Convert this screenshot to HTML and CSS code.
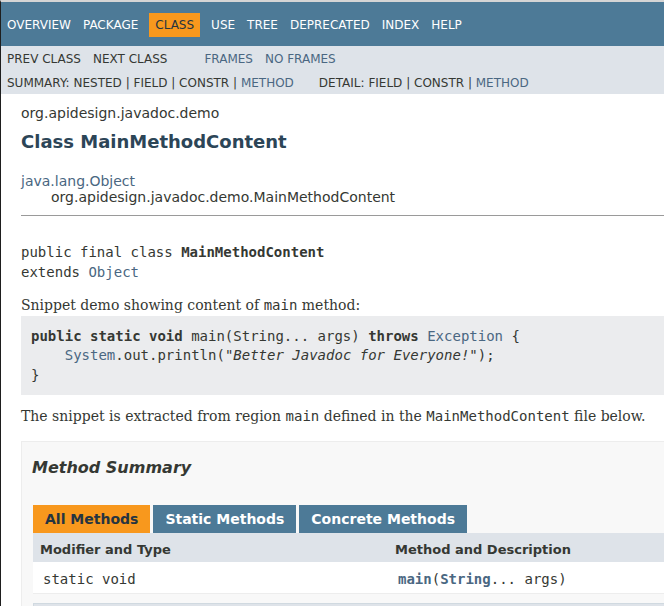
FILE: index.html
```html
<!DOCTYPE html>
<html lang="en">
<head>
<meta charset="utf-8">
<title>MainMethodContent</title>
<link rel="stylesheet" href="styles.css">
</head>
<body>
<div class="topNav">
  <ul class="navList">
    <li><a href="#">Overview</a></li>
    <li><a href="#">Package</a></li>
    <li class="current">Class</li>
    <li><a href="#">Use</a></li>
    <li><a href="#">Tree</a></li>
    <li><a href="#">Deprecated</a></li>
    <li><a href="#">Index</a></li>
    <li><a href="#">Help</a></li>
  </ul>
</div>
<div class="subNav">
  <div class="subRow">
    <ul class="navList">
      <li>Prev Class</li>
      <li>Next Class</li>
    </ul>
    <ul class="navList">
      <li><a href="#">Frames</a></li>
      <li><a href="#">No Frames</a></li>
    </ul>
  </div>
  <div class="subRow2">
    <ul class="subNavList">
      <li>Summary:&nbsp;</li>
      <li>Nested&nbsp;|&nbsp;</li>
      <li>Field&nbsp;|&nbsp;</li>
      <li>Constr&nbsp;|&nbsp;</li>
      <li><a href="#">Method</a></li>
    </ul>
    <ul class="subNavList">
      <li>Detail:&nbsp;</li>
      <li>Field&nbsp;|&nbsp;</li>
      <li>Constr&nbsp;|&nbsp;</li>
      <li><a href="#">Method</a></li>
    </ul>
  </div>
</div>
<div class="header">
  <div class="subTitle">org.apidesign.javadoc.demo</div>
  <h2 class="title">Class MainMethodContent</h2>
</div>
<div class="contentContainer">
  <ul class="inheritance">
    <li><a href="#">java.lang.Object</a></li>
    <li>
      <ul class="inheritance">
        <li>org.apidesign.javadoc.demo.MainMethodContent</li>
      </ul>
    </li>
  </ul>
  <hr>
  <pre class="sig">public final class <b>MainMethodContent</b>
extends <a href="#">Object</a></pre>
  <div class="block">Snippet demo showing content of <code>main</code> method:</div>
  <pre class="snippet"><b>public static void</b> main(String... args) <b>throws</b> <a href="#">Exception</a> {
    <a href="#">System</a>.out.println(<i>"Better Javadoc for Everyone!"</i>);
}</pre>
  <div class="block after">The snippet is extracted from region <code>main</code> defined in the <code>MainMethodContent</code> file below.</div>
  <div class="summary">
    <h3>Method Summary</h3>
    <div class="tabs">
      <span class="tab active">All Methods</span>
      <span class="tab">Static Methods</span>
      <span class="tab">Concrete Methods</span>
    </div>
    <table class="memberSummary">
      <tr>
        <th class="colFirst">Modifier and Type</th>
        <th class="colLast">Method and Description</th>
      </tr>
      <tr>
        <td class="colFirst"><code>static void</code></td>
        <td class="colLast"><code><a href="#">main</a>(<a href="#">String</a>... args)</code></td>
      </tr>
    </table>
    <div class="inherited"></div>
  </div>
</div>
</body>
</html>
```

FILE: styles.css
```css
html, body {
  margin: 0;
  padding: 0;
}

body {
  font-family: 'DejaVu Sans', Arial, Helvetica, sans-serif;
  font-size: 14px;
  color: #353833;
  background: #ffffff;
  border-left: 1px solid #1e1e1e;
  border-top: 2px solid #d5d5d5;
  overflow: hidden;
}

a {
  color: #4A6782;
  text-decoration: none;
}

ul {
  list-style: none;
  margin: 0;
  padding: 0;
}

/* top navigation */
.topNav {
  background: #4D7A97;
  color: #ffffff;
  height: 33px;
  padding-top: 11px;
  font-size: 12px;
  line-height: 14px;
}

.topNav a {
  color: #ffffff;
}

.navList {
  display: flex;
}

.navList li {
  padding: 5px 6px;
  text-transform: uppercase;
  white-space: nowrap;
}

.topNav .current {
  background: #F8981D;
  color: #253441;
  margin: 0 5px;
}

/* sub navigation */
.subNav {
  background: #dee3e9;
  font-size: 12px;
  line-height: 14px;
  text-transform: uppercase;
}

.subRow {
  display: flex;
}

.subRow .navList {
  margin-right: 25px;
}

.subRow .navList li {
  padding: 6px 6px 4px;
}

.subRow2 {
  display: flex;
  padding: 6px 0 4px 6px;
}

.subNavList {
  display: flex;
  margin-right: 25px;
  white-space: nowrap;
}

/* header */
.header {
  margin: 0 20px;
  padding-top: 6px;
}

.subTitle {
  margin-top: 5px;
  line-height: 16px;
}

.title {
  font-size: 18px;
  line-height: 21px;
  margin: 10px 0 9px;
  color: #2c4557;
}

/* content */
.contentContainer {
  padding: 12px 0 10px 20px;
  margin-right: -40px;
}

.inheritance {
  line-height: 16px;
}

.inheritance .inheritance {
  margin-left: 30px;
}

hr {
  margin: 10px 0 0;
  border: 0;
  border-top: 1px solid #9a9a9a;
  height: 0;
}

pre, code {
  font-family: 'DejaVu Sans Mono', 'Liberation Mono', monospace;
  font-size: 14px;
}

.sig {
  margin: 26px 0 0;
  line-height: 20px;
}

.block {
  font-family: 'DejaVu Serif', Georgia, 'Times New Roman', serif;
  font-size: 14px;
  line-height: 16px;
  margin-top: 15px;
}

.block code {
  line-height: 16px;
}

.snippet {
  margin: 3px 0 0;
  padding: 10.5px 10px 10px;
  background: #ebecee;
  line-height: 19.5px;
}

.snippet i {
  font-style: italic;
}

.block.after {
  margin-top: 13px;
}

/* method summary */
.summary {
  margin-top: 17px;
  border: 1px solid #ededed;
  background: #f8f8f8;
  padding: 0 0 10px 10px;
}

.summary h3 {
  margin: 16px 0 0;
  font-size: 16px;
  line-height: 19px;
  font-style: italic;
}

.tabs {
  display: flex;
  gap: 3px;
  margin: 28px 0 0 1px;
}

.tab {
  padding: 6px 12px;
  line-height: 16px;
  font-size: 14px;
  font-weight: bold;
  background: #4D7A97;
  color: #ffffff;
  white-space: nowrap;
}

.tab.active {
  background: #F8981D;
  color: #253441;
}

.memberSummary {
  border-collapse: collapse;
  margin-left: 1px;
  width: 100%;
}

.memberSummary th {
  background: #dee3e9;
  text-align: left;
  font-size: 13px;
  line-height: 15px;
  padding: 9px 3px 5px 7px;
  white-space: nowrap;
}

.memberSummary th.colFirst {
  width: 345px;
}

.memberSummary td {
  background: #ffffff;
  padding: 9px 3px 5px 10px;
  line-height: 17px;
  border-bottom: 1px solid #ededed;
  white-space: nowrap;
}

.memberSummary td code {
  line-height: 17px;
}

.memberSummary td.colLast a {
  font-weight: bold;
}

.inherited {
  margin: 9px 0 0 1px;
  height: 30px;
  background: #dee3e9;
  border: 1px solid #d0d9e0;
}
```
